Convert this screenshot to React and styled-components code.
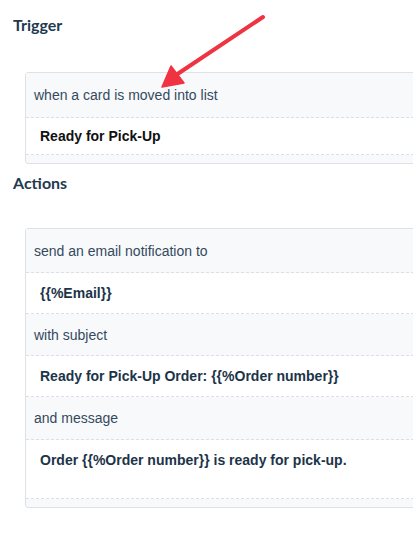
import React from "react";
import styled, { createGlobalStyle } from "styled-components";

const GlobalStyle = createGlobalStyle`
  html, body {
    margin: 0;
    padding: 0;
    background: #ffffff;
    overflow: hidden;
  }
`;

const Page = styled.div`
  position: relative;
  width: 413px;
  height: 534px;
  padding-top: 15px;
  box-sizing: border-box;
`;

const Section = styled.section`
  display: flex;
  flex-direction: column;
  margin-bottom: ${(p) => p.$gap || 0}px;
`;

const Heading = styled.h2`
  margin: 0 0 ${(p) => p.$below}px 13px;
  font-family: Lato, "Liberation Sans", sans-serif;
  font-weight: 700;
  font-size: 16px;
  line-height: 20px;
  color: #1f3a4f;
`;

const Card = styled.div`
  margin-left: 25px;
  margin-right: -12px;
  border: 1px solid #dfe1e6;
  border-radius: 3px;
  background: #f8f9fb;
  display: flex;
  flex-direction: column;
  font-family: "Liberation Sans", Arial, sans-serif;
  font-size: 14px;
`;

const Row = styled.div`
  height: ${(p) => p.$h}px;
  display: flex;
  align-items: ${(p) => (p.$top ? "flex-start" : "center")};
  padding: ${(p) => (p.$top ? "12px" : "0")} 0 0 ${(p) => (p.$value ? 14 : 8)}px;
  box-sizing: content-box;
  border-bottom: 1px dashed #dcdfe5;
  background: ${(p) => (p.$value ? "#ffffff" : "#f8f9fb")};
  color: ${(p) => (p.$value ? p.$ink || "#1c3449" : "#34495e")};
  font-weight: ${(p) => (p.$value ? 700 : 400)};
  line-height: 16px;
`;

const Strip = styled.div`
  height: 8px;
`;

const Arrow = styled.svg`
  position: absolute;
  left: 0;
  top: 0;
  pointer-events: none;
`;

export default function App() {
  return (
    <Page>
      <GlobalStyle />
      <Section $gap={9}>
        <Heading $below={37}>Trigger</Heading>
        <Card>
          <Row $h={44}>when a card is moved into list</Row>
          <Row $h={36} $value $ink="#111111">
            Ready for Pick-Up
          </Row>
          <Strip />
        </Card>
      </Section>
      <Section>
        <Heading $below={35}>Actions</Heading>
        <Card>
          <Row $h={43}>send an email notification to</Row>
          <Row $h={40} $value>
            {"{{%Email}}"}
          </Row>
          <Row $h={41}>with subject</Row>
          <Row $h={40} $value>
            {"Ready for Pick-Up Order: {{%Order number}}"}
          </Row>
          <Row $h={42}>and message</Row>
          <Row $h={46} $value $top>
            {"Order {{%Order number}} is ready for pick-up."}
          </Row>
          <Strip />
        </Card>
      </Section>
      <Arrow width="413" height="534" viewBox="0 0 413 534">
        <path
          d="M263 17 L176 75"
          stroke="#ef3340"
          strokeWidth="4"
          strokeLinecap="round"
        />
        <path d="M162 87 L171 66 L184 83 Z" fill="#ef3340" stroke="#ef3340" strokeWidth="1.5" strokeLinejoin="round" />
      </Arrow>
    </Page>
  );
}
